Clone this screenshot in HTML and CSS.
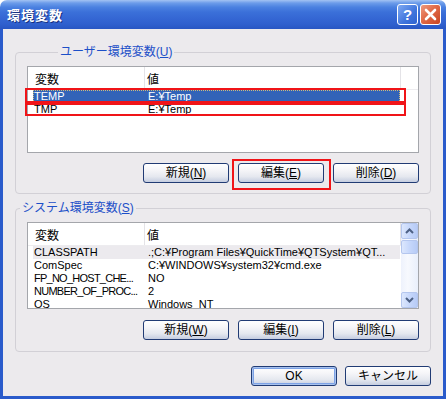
FILE: index.html
```html
<!DOCTYPE html>
<html lang="ja">
<head>
<meta charset="utf-8">
<title>環境変数</title>
<link rel="stylesheet" href="styles.css">
</head>
<body>
<div class="window">
  <div class="titlebar">
    <span class="title">環境変数</span>
    <div class="tbtns">
      <span class="tbtn help">?</span>
      <span class="tbtn close"><svg width="19" height="19" viewBox="0 0 19 19"><path d="M5 5 L14 14 M14 5 L5 14" stroke="#fff" stroke-width="2.6" stroke-linecap="round" fill="none"/></svg></span>
    </div>
  </div>
  <div class="client">
    <fieldset class="group g1">
      <legend>ユーザー環境変数(<u>U</u>)</legend>
      <div class="list">
        <div class="lhead">
          <span class="h1">変数</span><span class="h2">値</span><span class="h3"></span>
        </div>
        <div class="row sel"><span class="c1">TEMP</span><span class="c2">E:¥Temp</span></div>
        <div class="row"><span class="c1">TMP</span><span class="c2">E:¥Temp</span></div>
        <div class="mark m1"></div>
        <div class="mark m2"></div>
      </div>
      <div class="btns">
        <button class="btn">新規(<u>N</u>)</button>
        <span class="markwrap"><button class="btn">編集(<u>E</u>)</button></span>
        <button class="btn">削除(<u>D</u>)</button>
      </div>
    </fieldset>
    <fieldset class="group g2">
      <legend>システム環境変数(<u>S</u>)</legend>
      <div class="list l2">
        <div class="lmain">
          <div class="lhead">
            <span class="h1">変数</span><span class="h2">値</span>
          </div>
          <div class="row hl"><span class="c1">CLASSPATH</span><span class="c2">.;C:¥Program Files¥QuickTime¥QTSystem¥QT...</span></div>
          <div class="row"><span class="c1">ComSpec</span><span class="c2">C:¥WINDOWS¥system32¥cmd.exe</span></div>
          <div class="row"><span class="c1 tight">FP_NO_HOST_CHE...</span><span class="c2">NO</span></div>
          <div class="row"><span class="c1 tight">NUMBER_OF_PROC...</span><span class="c2">2</span></div>
          <div class="row"><span class="c1">OS</span><span class="c2">Windows_NT</span></div>
        </div>
        <div class="vscroll">
          <span class="sbtn"><svg width="9" height="6" viewBox="0 0 9 6"><path d="M1 5 L4.5 1.5 L8 5" stroke="#4D6185" stroke-width="2" fill="none"/></svg></span>
          <span class="thumb"></span>
          <span class="track"></span>
          <span class="sbtn"><svg width="9" height="6" viewBox="0 0 9 6"><path d="M1 1 L4.5 4.5 L8 1" stroke="#4D6185" stroke-width="2" fill="none"/></svg></span>
        </div>
      </div>
      <div class="btns">
        <button class="btn">新規(<u>W</u>)</button>
        <button class="btn">編集(<u>I</u>)</button>
        <button class="btn">削除(<u>L</u>)</button>
      </div>
    </fieldset>
    <div class="dlgbtns">
      <button class="btn default">OK</button>
      <button class="btn">キャンセル</button>
    </div>
  </div>
</div>
</body>
</html>
```
FILE: styles.css
```css
* { box-sizing: border-box; }
html, body { margin: 0; background: #fff; }
body {
  font-family: "Liberation Sans", "Noto Sans CJK JP", sans-serif;
  font-size: 12px;
  color: #000;
}
.window {
  width: 446px;
  height: 399px;
  display: flex;
  flex-direction: column;
}
.titlebar {
  height: 29px;
  flex: none;
  border-radius: 7px 7px 0 0;
  background: linear-gradient(#A3C3F3 0px, #6C9CEA 3px, #4C82E1 7px, #3B70D9 12px, #3567D4 18px, #2F60CE 24px, #2856C3 29px);
  display: flex;
  align-items: center;
  padding: 0 5px 0 7px;
}
.title {
  flex: 1;
  color: #fff;
  font: bold 13px "Noto Sans CJK JP", sans-serif;
  letter-spacing: 1px;
  line-height: 16px;
  text-shadow: 1px 1px 0 #17307F;
}
.tbtns { display: flex; gap: 2px; }
.tbtn {
  width: 21px;
  height: 21px;
  border: 1px solid #fff;
  border-radius: 3px;
  display: flex;
  align-items: center;
  justify-content: center;
}
.help {
  background: linear-gradient(135deg, #7FA9F2, #3E74DC 60%, #2E62D0);
  color: #fff;
  font: bold 15px "Liberation Sans", sans-serif;
}
.close {
  background: linear-gradient(135deg, #EE9A80, #E06A48 45%, #C94420);
}
.client {
  flex: 1;
  background: #ECEAED;
  border: 3px solid #2A5BCB;
  border-top: 0;
  padding: 16px 12px 0 12px;
  display: flex;
  flex-direction: column;
}
.group {
  margin: 0;
  min-width: 0;
  border: 1px solid #D2D0D6;
  border-radius: 4px;
  padding: 7px 0 10px 0;
}
.group legend {
  padding: 0 2px;
  margin-left: 42px;
  line-height: 14px;
  color: #1C4FC8;
}
.g2 { margin-top: 7px; padding-bottom: 11px; }
.g2 legend { margin-left: 4px; }
.list {
  position: relative;
  height: 87px;
  margin: 0 11px;
  background: #fff;
  border: 1px solid #A4A6AB;
}
.lhead {
  display: flex;
  height: 23px;
  border-bottom: 1px solid #EDECEF;
}
.lhead span {
  display: flex;
  align-items: center;
  height: 100%;
}
.h1 { width: 117px; padding-left: 7px; border-right: 1px solid #E4E3E7; }
.h2 { width: 256px; padding-left: 2px; border-right: 1px solid #E4E3E7; }
.h3 { flex: 1; }
.row {
  display: flex;
  width: 367px;
  height: 13px;
  margin-left: 5px;
  font-size: 11px;
  line-height: 13px;
  white-space: nowrap;
}
.c1 { width: 112px; padding-left: 1px; overflow: hidden; }
.c1.tight { letter-spacing: -0.75px; }
.c2 { flex: 1; padding-left: 3px; overflow: hidden; }
.sel {
  background: #3263B8;
  color: #fff;
  outline: 1px dotted #CDBB7E;
  outline-offset: -1px;
}
.hl { background: #ECEAEE; }
.mark {
  position: absolute;
  left: -3px;
  width: 381px;
  border: 2px solid #F01418;
}
.m1 { top: 21px; height: 15px; }
.m2 { top: 36px; height: 13px; }
.l2 { display: flex; }
.lmain { flex: 1; overflow: hidden; }
.vscroll {
  width: 17px;
  display: flex;
  flex-direction: column;
  background: linear-gradient(to right, #EEF2FC, #F7F9FE 40%, #E9EFFB);
}
.sbtn, .thumb {
  height: 16px;
  flex: none;
  border: 1px solid #B4C6EE;
  border-radius: 2px;
  background: linear-gradient(to right, #DCE7FD, #C6D7FB 50%, #B7CBF6);
  display: flex;
  align-items: center;
  justify-content: center;
}
.thumb { margin-top: 1px; height: 14px; }
.track { flex: 1; }
.btns {
  display: flex;
  justify-content: flex-end;
  gap: 9px;
  margin: 10px 11px 0 11px;
}
.g2 .btns { margin-top: 11px; }
.btn {
  width: 86px;
  height: 20px;
  padding: 0;
  border: 1px solid #213B74;
  border-radius: 3px;
  background: linear-gradient(#FFFFFF, #F5F5F8 35%, #E5E8EF 70%, #C5CDE0);
  font-family: "Liberation Sans", "Noto Sans CJK JP", sans-serif;
  font-size: 12px;
  line-height: 18px;
  color: #000;
}
.markwrap { position: relative; display: flex; }
.markwrap::after {
  content: "";
  position: absolute;
  left: -6px;
  right: -7px;
  top: -4px;
  bottom: -7px;
  border: 2px solid #F01418;
}
.dlgbtns {
  display: flex;
  justify-content: flex-end;
  gap: 8px;
  margin-top: 14px;
}
.default {
  box-shadow: inset 0 0 0 1px #A8C2EE, inset 0 0 0 2px #7DA2E6;
}
```
